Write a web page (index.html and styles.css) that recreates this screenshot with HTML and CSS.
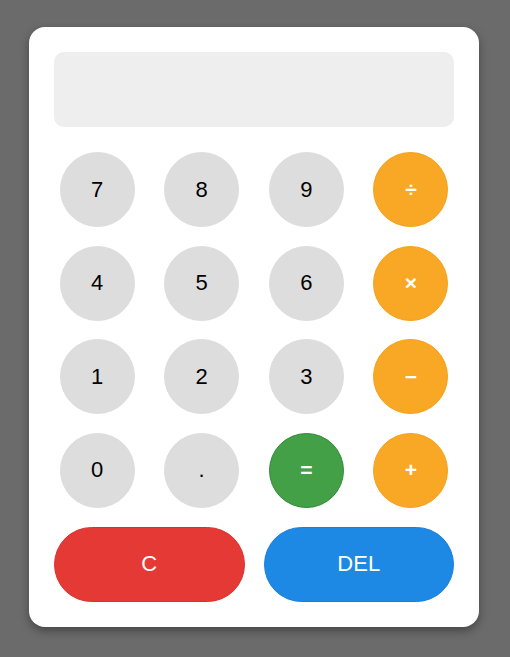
FILE: index.html
```html
<!DOCTYPE html>
<html>
<head>
<meta charset="utf-8">
<link rel="stylesheet" href="styles.css">
</head>
<body>
<div class="calc">
  <div class="display"></div>
  <div class="keys">
    <button class="key num">7</button>
    <button class="key num">8</button>
    <button class="key num">9</button>
    <button class="key op">÷</button>
    <button class="key num">4</button>
    <button class="key num">5</button>
    <button class="key num">6</button>
    <button class="key op">×</button>
    <button class="key num">1</button>
    <button class="key num">2</button>
    <button class="key num">3</button>
    <button class="key op">−</button>
    <button class="key num">0</button>
    <button class="key num">.</button>
    <button class="key eq">=</button>
    <button class="key op">+</button>
  </div>
  <div class="actions">
    <button class="wide clear">C</button>
    <button class="wide del">DEL</button>
  </div>
</div>
</body>
</html>
```
FILE: styles.css
```css
html, body {
  margin: 0;
  padding: 0;
}
body {
  background: #6b6b6b;
  font-family: "Liberation Sans", Arial, sans-serif;
  width: 510px;
  height: 657px;
  display: flex;
  justify-content: flex-start;
  align-items: flex-start;
}
.calc {
  margin-top: 27px;
  margin-left: 29px;
  width: 400px;
  padding: 25px;
  background: #ffffff;
  border-radius: 16px;
  box-shadow: 0 4px 10px rgba(0,0,0,0.35);
}
.display {
  height: 75px;
  background: #eeeeee;
  border-radius: 10px;
  margin-bottom: 25px;
}
.keys {
  display: grid;
  grid-template-columns: repeat(4, 1fr);
  gap: 18.67px;
  justify-items: center;
}
.key {
  width: 75px;
  height: 75px;
  border-radius: 50%;
  border: 1px solid transparent;
  font-family: "Liberation Sans", Arial, sans-serif;
  font-size: 22px;
  padding: 0;
  cursor: pointer;
}
.num {
  background: #dddddd;
  border-color: #dddddd;
  color: #000000;
}
.op {
  background: #f9a825;
  border-color: #f5a01a;
  color: #ffffff;
  font-weight: bold;
  font-size: 21px;
}
.eq {
  background: #43a047;
  border-color: #2e8b36;
  color: #ffffff;
  font-weight: bold;
  font-size: 21px;
}
.actions {
  display: flex;
  gap: 19px;
  margin-top: 19px;
}
.wide {
  flex: 1;
  height: 75px;
  border-radius: 38px;
  border: 1px solid transparent;
  color: #ffffff;
  font-family: "Liberation Sans", Arial, sans-serif;
  font-size: 22px;
  padding: 0;
}
.clear {
  background: #e53935;
  border-color: #d9322e;
}
.del {
  background: #1e88e5;
  border-color: #1a7fd8;
}
```
